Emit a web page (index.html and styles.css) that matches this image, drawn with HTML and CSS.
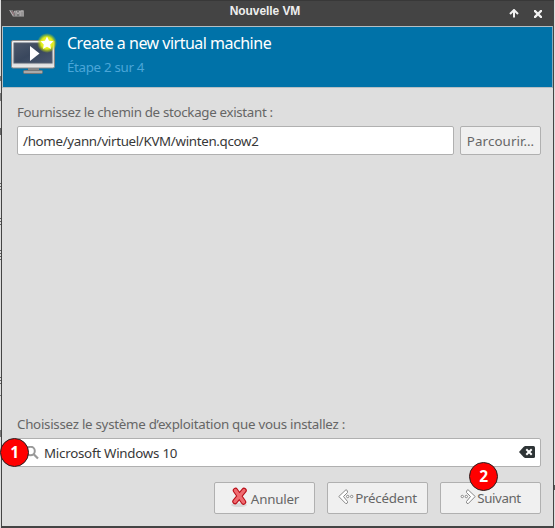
FILE: index.html
```html
<!DOCTYPE html>
<html lang="fr">
<head>
<meta charset="utf-8">
<title>Nouvelle VM</title>
<link rel="stylesheet" href="styles.css">
</head>
<body>
<main class="window">
  <header class="titlebar">
    <svg class="app-icon" width="15" height="9" viewBox="0 0 15 9"><path d="M0 1h4l1.500 4L7 1h8v7H4z" fill="#777"/><path d="M1 1.500l3 5 2-5M7 7V2l2 3 2-3v5M12 7V2h2v5" fill="none" stroke="#b9b5b6" stroke-width="1"/><path d="M3 2l2 4" stroke="#936d75"/></svg>
    <h1 class="window-title">Nouvelle VM</h1>
    <div class="window-controls">
      <svg width="10" height="9" viewBox="0 0 10 9"><path d="M5 8.500V2M1 5l4-4 4 4" fill="none" stroke="#f2f2f2" stroke-width="2"/></svg>
      <svg width="8" height="8" viewBox="0 0 8 8"><path d="M1 1l6 6M7 1L1 7" stroke="#f2f2f2" stroke-width="2.400" stroke-linecap="square"/></svg>
    </div>
  </header>
  <section class="banner">
    <svg class="vm-icon" width="48" height="48" viewBox="0 0 48 48">
      <defs>
        <linearGradient id="frame" x2="0" y2="1"><stop stop-color="#f4f4f4"/><stop offset=".75" stop-color="#d2d2d2"/><stop offset="1" stop-color="#eee"/></linearGradient>
        <linearGradient id="screen" x2="1" y2="1"><stop stop-color="#4d586b"/><stop offset=".5" stop-color="#39475d"/><stop offset="1" stop-color="#4a5770"/></linearGradient>
        <radialGradient id="glow"><stop stop-color="#f8ff70"/><stop offset=".6" stop-color="#dfec13"/><stop offset="1" stop-color="#b3d000" stop-opacity="0"/></radialGradient>
      </defs>
      <path d="M18 35h11v4H18z" fill="#888"/><rect x="13.500" y="38.500" width="19" height="3" rx="1" fill="#aaa" stroke="#777"/>
      <rect x="1.500" y="8.500" width="43" height="27.500" rx="1.500" fill="url(#frame)" stroke="#888"/>
      <rect x="4" y="11" width="38" height="20" fill="url(#screen)" stroke="#566170"/>
      <path d="M20 14v15l9.500-7.500z" fill="#fff"/>
      <circle cx="37" cy="11" r="10" fill="url(#glow)"/>
      <path d="M37 4.500l2 4.200 4.500.500-3.300 3.200.8 4.700-4-2.300-4 2.300.8-4.700-3.300-3.200 4.500-.500z" fill="#fff"/>
    </svg>
    <div>
      <h2 class="heading">Create a new virtual machine</h2>
      <p class="step">Étape 2 sur 4</p>
    </div>
  </section>
  <section class="content">
    <label class="label" for="path">Fournissez le chemin de stockage existant :</label>
    <div class="path-row">
      <div class="field path-field" id="path">/home/yann/virtuel/KVM/winten.qcow2</div>
      <button class="button browse">Parcourir…</button>
    </div>
    <label class="label os-label" for="os">Choisissez le système d’exploitation que vous installez :</label>
    <div class="field os-field" id="os">
      <svg width="14" height="14" viewBox="0 0 14 14"><circle cx="5.500" cy="5" r="4.300" fill="none" stroke="#999" stroke-width="2"/><path d="M8.500 8l4.500 4.500" stroke="#999" stroke-width="2.200"/></svg>
      <span class="os-name">Microsoft Windows 10</span>
      <svg class="clear" width="16" height="12" viewBox="0 0 16 12"><path d="M0 6l4.500-5L6 0h8.500Q16 0 16 1.500v9q0 1.500-1.500 1.500H6l-1.500-1z" fill="#2e3436"/><path d="M8 4l4 4M12 4L8 8" stroke="#fff" stroke-width="2" stroke-linecap="square"/></svg>
      <b class="marker marker-one">1</b>
    </div>
    <div class="actions">
      <button class="button cancel">
        <svg width="17" height="20" viewBox="0 0 17 20"><ellipse cx="8" cy="18" rx="8" ry="2" fill="#d8d8d8"/><path d="M4.500 3.500l8 11.500M13 3.500L4 14.500" stroke="#b90e18" stroke-width="5.500" stroke-linecap="round"/><path d="M4.500 3.500l8 11.500M13 3.500L4 14.500" stroke="#ef6b70" stroke-width="3.400" stroke-linecap="round"/></svg>
        <span>Annuler</span>
      </button>
      <button class="button previous">
        <svg width="16" height="16" viewBox="0 0 16 16"><g class="arrow"><path d="M8 .700L.800 7.500 8 14.800q2-.500 1.500-2.300L5.500 7.500l4-4Q9.800 1 8 .700z"/><circle cx="9.700" cy="7.500" r="1.200"/><circle cx="13.700" cy="7.500" r="1.200"/></g></svg>
        <span>Précédent</span>
      </button>
      <button class="button next">
        <svg width="16" height="16" viewBox="0 0 16 16"><g class="arrow" transform="matrix(-1 0 0 1 16 0)"><path d="M8 .700L.800 7.500 8 14.800q2-.500 1.500-2.300L5.500 7.500l4-4Q9.800 1 8 .700z"/><circle cx="9.700" cy="7.500" r="1.200"/><circle cx="13.700" cy="7.500" r="1.200"/></g></svg>
        <span>Suivant</span>
        <b class="marker marker-two">2</b>
      </button>
    </div>
  </section>
</main>
</body>
</html>
```
FILE: styles.css
```css
* { box-sizing: border-box; }
body {
  margin: 0; width: 555px; height: 528px; padding: 0 1px;
  font: 13.33px/20px "Noto Sans", sans-serif; letter-spacing: -0.32px; color: #666; overflow: hidden;
  background:
    linear-gradient(#777, #777) 0 76px / 1px 5px no-repeat,
    linear-gradient(#777, #777) 0 93px / 1px 8px no-repeat,
    linear-gradient(#666, #666) 0 128px / 1px 7px no-repeat,
    repeating-linear-gradient(#666 0 1px, #ddd 1px 3px) 0 183px / 1px 7px no-repeat,
    repeating-linear-gradient(#666 0 1px, #ddd 1px 3px) 0 218px / 1px 7px no-repeat,
    repeating-linear-gradient(#666 0 1px, #ddd 1px 3px) 0 250px / 1px 10px no-repeat,
    repeating-linear-gradient(#666 0 1px, #ddd 1px 3px) 0 377px / 1px 7px no-repeat,
    linear-gradient(#777, #777) 0 395px / 1px 1px no-repeat,
    linear-gradient(#777, #777) 0 430px / 1px 7px no-repeat,
    linear-gradient(#555, #555) 554px 485px / 1px 5px no-repeat,
    #ddd;
}
h1, h2, p { margin: 0; font-weight: 400; }
svg { display: block; flex: none; }
.window { width: 553px; height: 528px; border: 1px solid #444; border-top: 0; border-bottom-width: 2px; background: #dedede; display: flex; flex-direction: column; white-space: nowrap; }
.titlebar { height: 26px; flex: none; background: #444; border-top: 1px solid #383838; display: grid; grid-template-columns: 70px 1fr 70px; align-items: center; margin: 0 -1px; padding: 0 12px 0 8px; }
.window-title { font: bold 12px/20px "Liberation Sans", sans-serif; letter-spacing: -0.08px; color: #eee; text-align: center; margin: -5px 21px 0 0; }
.app-icon { margin-top: -1px; }
.window-controls { display: flex; justify-content: flex-end; align-items: center; gap: 15px; }
.banner { height: 62px; flex: none; border: 1px solid #b5bfc4; border-right-color: #8ab; background: #0072a8; display: flex; padding: 5px 7px; gap: 9px; }
.heading { color: #fff; font-size: 16px; line-height: 22px; letter-spacing: -0.5px; }
.step { color: #4ba6d8; line-height: 20px; margin-top: 3px; }
.content { flex: 1; padding: 14px 12px 12px 15px; display: flex; flex-direction: column; }
.label { height: 20px; }
.path-row { display: flex; gap: 6px; margin-top: 4px; height: 29px; }
.field { background: #fff; border: 1px solid #b0b0b0; border-radius: 2px; color: #383838; display: flex; align-items: center; }
.path-field { width: 437px; padding-left: 5px; }
.button { position: relative; font: inherit; letter-spacing: -0.2px; color: #666; background: #f0f0f0; border: 1px solid #b0b0b0; border-radius: 2px; padding: 0; display: flex; align-items: center; justify-content: center; }
.browse { width: 81px; letter-spacing: 0.1px; }
.os-label { margin-top: auto; letter-spacing: -0.27px; }
.os-field { position: relative; height: 29px; margin-top: 4px; padding: 0 5px 0 7px; flex: none; }
.os-name { margin-left: 5px; letter-spacing: -0.25px; }
.clear { margin-left: auto; margin-top: -1px; }
.actions { display: flex; justify-content: flex-end; gap: 12px; margin-top: 15px; }
.actions .button { width: 101px; height: 32px; }
.cancel svg { margin: -2px 3px 0 1px; }
.cancel span { padding-top: 2px; }
.previous svg, .next svg { margin: -3px 1px 0 0; }
.next span { letter-spacing: -0.4px; }
.arrow { fill: #fff; stroke: #888; stroke-width: 1; }
.marker { position: absolute; width: 29px; height: 29px; border: 1px solid #222; border-radius: 50%; background: #f00; color: #fff; font: bold 15.5px/27px "Noto Sans", sans-serif; text-align: center; }
.marker-one { left: -18px; top: -1px; }
.marker-two { left: 28px; top: -21px; }
```
